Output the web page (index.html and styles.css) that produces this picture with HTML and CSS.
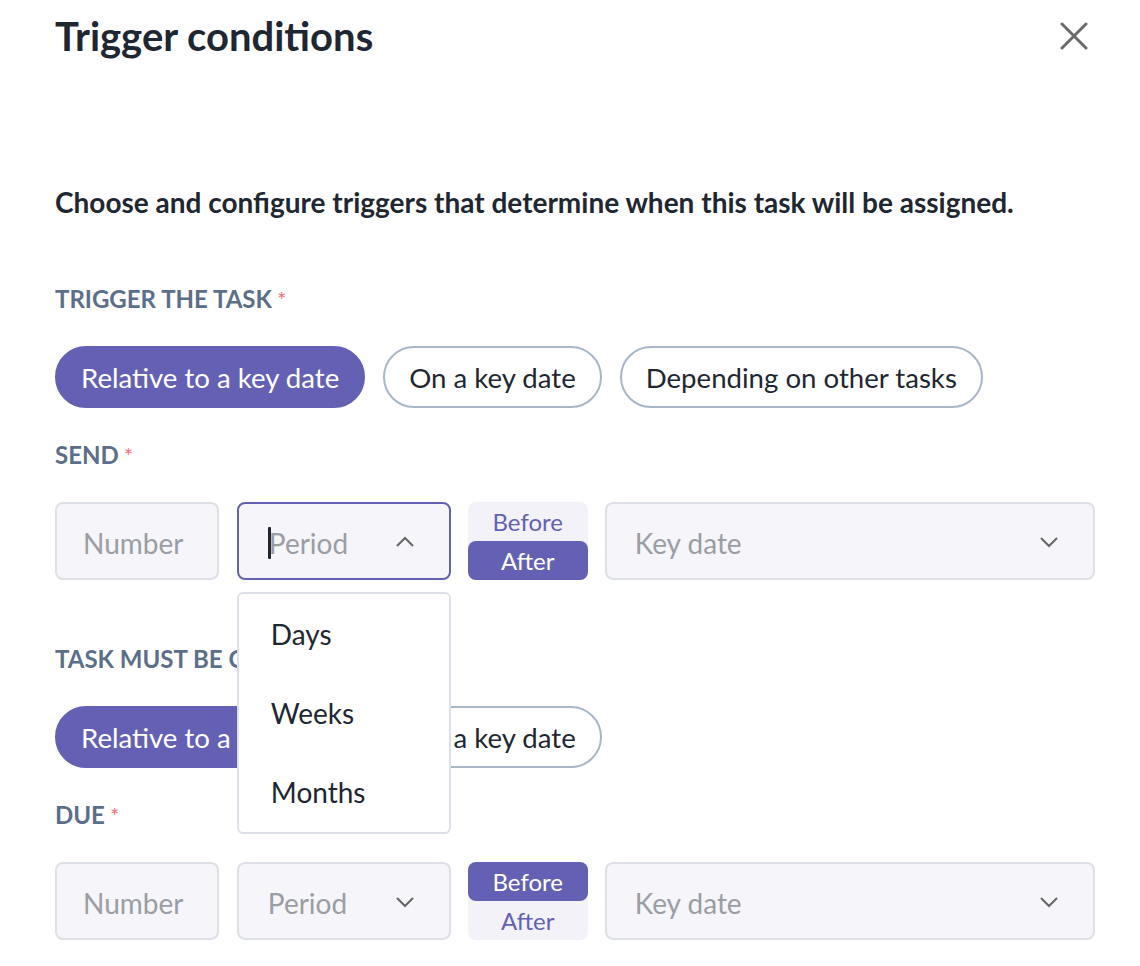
FILE: index.html
```html
<!DOCTYPE html>
<html lang="en">
<head>
<meta charset="utf-8">
<title>Trigger conditions</title>
<link rel="stylesheet" href="styles.css">
</head>
<body>
<div class="modal">
  <header class="head">
    <h1 class="title">Trigger conditions</h1>
    <button class="close" aria-label="Close">
      <svg width="28" height="28" viewBox="0 0 28 28"><path d="M2 2 L26 26 M26 2 L2 26" stroke="#6b6b6b" stroke-width="3" stroke-linecap="round" fill="none"/></svg>
    </button>
  </header>

  <p class="intro">Choose and configure triggers that determine when this task will be assigned.</p>

  <section class="group">
    <div class="label">TRIGGER THE TASK<span class="req">*</span></div>
    <div class="pills">
      <button class="pill active">Relative to a key date</button>
      <button class="pill">On a key date</button>
      <button class="pill">Depending on other tasks</button>
    </div>
    <div class="label">SEND<span class="req">*</span></div>
    <div class="fields">
      <div class="field num"><span class="ph">Number</span></div>
      <div class="field-wrap">
        <div class="field period focus"><span class="caret"></span><span class="ph">Period</span>
          <svg class="chev" width="20" height="12" viewBox="0 0 20 12"><path d="M2 10 L10 2 L18 10" stroke="#666" stroke-width="2" fill="none"/></svg>
        </div>
        <ul class="menu">
          <li>Days</li>
          <li>Weeks</li>
          <li>Months</li>
        </ul>
      </div>
      <div class="toggle">
        <span class="seg">Before</span>
        <span class="seg on">After</span>
      </div>
      <div class="field key"><span class="ph">Key date</span>
        <svg class="chev" width="20" height="12" viewBox="0 0 20 12"><path d="M2 2 L10 10 L18 2" stroke="#666" stroke-width="2" fill="none"/></svg>
      </div>
    </div>
  </section>

  <section class="group second">
    <div class="label">TASK MUST BE COMPLETED<span class="req">*</span></div>
    <div class="pills">
      <button class="pill active">Relative to a key date</button>
      <button class="pill">On a key date</button>
    </div>
    <div class="label">DUE<span class="req">*</span></div>
    <div class="fields">
      <div class="field num"><span class="ph">Number</span></div>
      <div class="field-wrap">
        <div class="field period"><span class="ph">Period</span>
          <svg class="chev" width="20" height="12" viewBox="0 0 20 12"><path d="M2 2 L10 10 L18 2" stroke="#666" stroke-width="2" fill="none"/></svg>
        </div>
      </div>
      <div class="toggle">
        <span class="seg on">Before</span>
        <span class="seg">After</span>
      </div>
      <div class="field key"><span class="ph">Key date</span>
        <svg class="chev" width="20" height="12" viewBox="0 0 20 12"><path d="M2 2 L10 10 L18 2" stroke="#666" stroke-width="2" fill="none"/></svg>
      </div>
    </div>
  </section>
</div>
</body>
</html>
```
FILE: styles.css
```css
* { box-sizing: border-box; }
html, body { margin: 0; padding: 0; background: #fff; }
body {
  font-family: Lato, "Liberation Sans", sans-serif;
  color: #1f2733;
  overflow: hidden;
}
.modal {
  width: 1095px;
  padding-left: 55px;
}
.head {
  display: flex;
  justify-content: space-between;
  align-items: flex-start;
  padding-top: 12px;
}
.title {
  margin: 0;
  font-size: 40px;
  line-height: 48px;
  font-weight: 700;
  color: #1f2733;
}
.close {
  border: 0;
  background: none;
  padding: 0;
  margin: 10px 7px 0 0;
  width: 28px;
  height: 28px;
  display: block;
}
.close svg { display: block; }
.intro {
  margin: 127px 0 0;
  font-size: 28px;
  line-height: 30px;
  font-weight: 700;
  color: #1f2733;
}
.group { margin-top: 70px; }
.group.second { margin-top: 67px; }
.label {
  height: 24px;
  font-size: 24px;
  line-height: 24px;
  font-weight: 700;
  color: #5b6e8a;
}
.req {
  color: #f0737c;
  margin-left: 5px;
  font-weight: 400;
  font-size: 22px;
  line-height: 0;
}
.pills {
  display: flex;
  gap: 18px;
  margin: 35px 0;
}
.pill {
  height: 62px;
  padding: 0 24px;
  border-radius: 31px;
  border: 2px solid #a9b6c8;
  background: #fff;
  font-family: Lato, "Liberation Sans", sans-serif;
  font-size: 27.6px;
  color: #1f2733;
}
.pill.active {
  background: #6461b4;
  border-color: #6461b4;
  color: #fff;
}
.fields {
  display: flex;
  margin-top: 35px;
  height: 78px;
}
.field {
  height: 78px;
  padding-top: 3px;
  border: 2px solid #dde1e7;
  border-radius: 8px;
  background: #f5f5fa;
  display: flex;
  align-items: center;
  font-size: 28px;
  position: relative;
}
.ph { color: #9b9da4; }
.num { width: 164px; padding-left: 26px; }
.field-wrap { position: relative; width: 214px; margin-left: 18px; }
.period { width: 214px; padding-left: 29px; }
.period.focus { border-color: #6461b4; }
.caret {
  width: 3px;
  height: 32px;
  background: #1f2733;
  border-radius: 1px;
  margin-right: -2px;
}
.chev {
  position: absolute;
  right: 34px;
  top: 32px;
}
.toggle {
  width: 120px;
  margin-left: 17px;
  height: 78px;
  border-radius: 8px;
  background: #f3f2f9;
  display: flex;
  flex-direction: column;
}
.seg {
  flex: 1;
  display: flex;
  align-items: center;
  justify-content: center;
  font-size: 24px;
  color: #6461b4;
  border-radius: 8px;
}
.seg.on {
  background: #6461b4;
  color: #fff;
}
.key { width: 491px; margin-left: 17px; padding-left: 28px; }
.menu {
  position: absolute;
  left: 0;
  top: 90px;
  width: 214px;
  height: 242px;
  margin: 0;
  padding: 0;
  list-style: none;
  background: #fff;
  border: 2px solid #dde1e7;
  border-radius: 6px;
  z-index: 5;
}
.menu li {
  height: 79px;
  display: flex;
  align-items: center;
  padding-left: 32px;
  font-size: 28px;
  color: #1f2733;
}
```
